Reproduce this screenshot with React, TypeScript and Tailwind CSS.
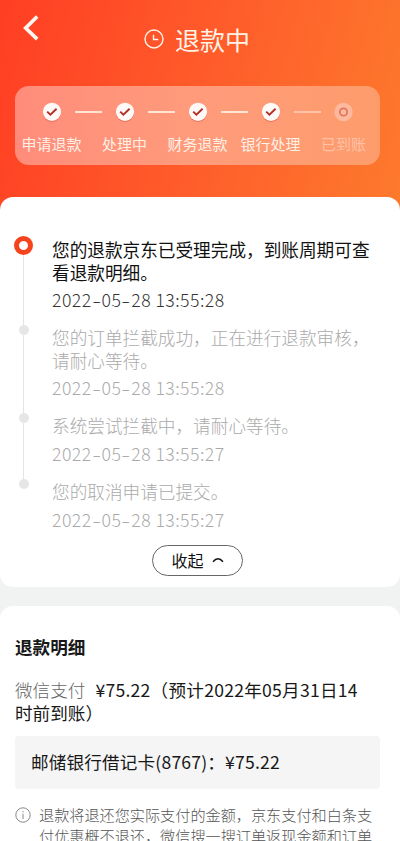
import React from 'react';
import { clsx } from 'clsx';

const steps = [
  { label: '申请退款', done: true },
  { label: '处理中', done: true },
  { label: '财务退款', done: true },
  { label: '银行处理', done: true },
  { label: '已到账', done: false },
];

const records = [
  {
    lines: ['您的退款京东已受理完成，到账周期可查', '看退款明细。'],
    date: '2022-05-28',
    time: '13:55:28',
    height: 'h-[89px]',
  },
  {
    lines: ['您的订单拦截成功，正在进行退款审核，', '请耐心等待。'],
    date: '2022-05-28',
    time: '13:55:28',
    height: 'h-[88px]',
  },
  {
    lines: ['系统尝试拦截中，请耐心等待。'],
    date: '2022-05-28',
    time: '13:55:27',
    height: 'h-[66px]',
  },
  {
    lines: ['您的取消申请已提交。'],
    date: '2022-05-28',
    time: '13:55:27',
    height: 'h-[66px]',
  },
];

function StepIcon({ done }: { done: boolean }) {
  if (!done) {
    return (
      <svg width="20" height="20" viewBox="0 0 20 20" fill="none">
        <circle cx="9.5" cy="10" r="9.2" fill="#fdb99d" />
        <circle cx="9.5" cy="10" r="3.7" stroke="#e2745e" strokeWidth="1.7" />
      </svg>
    );
  }
  return (
    <svg width="20" height="20" viewBox="0 0 20 20" fill="none">
      <circle cx="10" cy="10.8" r="9" fill="#e2573f" fillOpacity="0.75" />
      <circle cx="10" cy="9.8" r="9.1" fill="#fffaf8" />
      <path d="M5.2 9.6L8.4 12.6L14.6 6.8" stroke="#b22f26" strokeWidth="1.9" />
    </svg>
  );
}

function Progress() {
  return (
    <div className="mx-[15px] flex h-[79px] w-[365px] rounded-[14px] bg-gradient-to-r from-[#ff8c7b] via-[#ff9b7b] to-[#fd9c6b] pt-[16px]">
      {steps.map((step, index) => (
        <div
          key={step.label}
          className={clsx('w-[73px] shrink-0', step.done ? 'text-[#fff0e6]' : 'text-[#ffc2a6]')}
        >
          <div className="flex h-5 items-center">
            <div
              className={clsx(
                'h-[2px] w-[14px]',
                index > 0 && step.done && 'bg-[#ffe5d6]',
                index > 0 && !step.done && 'bg-[#ffc4a5]'
              )}
            />
            <div className="mx-[13px] shrink-0">
              <StepIcon done={step.done} />
            </div>
            <div
              className={clsx(
                'h-[2px] flex-1',
                index < 3 && 'bg-[#ffe5d6]',
                index === 3 && 'bg-[#ffc4a5]'
              )}
            />
          </div>
          <div className="-mx-2 mt-[11px] whitespace-nowrap text-center text-[15px] leading-[22px]">
            {step.label}
          </div>
        </div>
      ))}
    </div>
  );
}

function DateTime({ date, time }: { date: string; time: string }) {
  return (
    <>
      {date.split('-').map((part, index) => (
        <React.Fragment key={index}>
          {index > 0 && <span className="inline-block w-[10px] scale-x-150 text-center">-</span>}
          {part}
        </React.Fragment>
      ))}{' '}
      {time}
    </>
  );
}

function Timeline() {
  return (
    <div className="pl-[14px] pt-[39px]">
      {records.map((record, index) => (
        <div key={index} className={clsx('flex', record.height)}>
          <div className="flex w-[19px] shrink-0 flex-col items-center">
            {index === 0 ? (
              <div className="size-[19px] shrink-0 rounded-full border-[5px] border-[#f5431e] bg-white" />
            ) : (
              <div className="size-[10px] shrink-0 rounded-full bg-[#e6e6e6]" />
            )}
            {index < records.length - 1 && <div className="w-px flex-1 bg-[#e4e4e4]" />}
          </div>
          <div
            className={clsx(
              'ml-[19px] whitespace-nowrap text-[17.65px] leading-[22.5px]',
              index === 0 ? 'pt-[3px] text-[#111]' : 'pt-[2px] font-light text-[#aaa]'
            )}
          >
            <p>
              {record.lines.map((line, i) => (
                <React.Fragment key={line}>
                  {i > 0 && <br />}
                  {line}
                </React.Fragment>
              ))}
            </p>
            <p className={clsx('mt-[5px] tracking-[0.45px]', index === 0 && 'font-light text-[#333]')}>
              <DateTime date={record.date} time={record.time} />
            </p>
          </div>
        </div>
      ))}
    </div>
  );
}

export default function App() {
  return (
    <div className="flex h-[841px] w-[400px] flex-col overflow-hidden bg-[#f1f3f3] font-['Noto_Sans_CJK_SC',sans-serif]">
      {/* Header */}
      <header className="h-[212px] shrink-0 bg-[linear-gradient(105deg,#ff3e23_0%,#ff592a_45%,#fd7a2d_100%)]">
        <div className="flex h-[86px]">
          <svg className="ml-[22px] mt-[14px] shrink-0" width="18" height="28" viewBox="0 0 18 28" fill="none">
            <path d="M15.2 2.5L3.7 14L15.2 25.2" stroke="#fff6f2" strokeWidth="3.7" />
          </svg>
          <div className="ml-[104px] mt-[21px] flex h-[36px] items-center text-[#fff3e8]">
            <svg width="20" height="20" viewBox="0 0 20 20" fill="none" stroke="currentColor" strokeWidth="1.4">
              <circle cx="10" cy="10" r="9" />
              <path d="M9.5 5.7V10.5H14.3" />
            </svg>
            <h1 className="ml-[11px] text-[25px] leading-[36px]">退款中</h1>
          </div>
        </div>
        <Progress />
      </header>

      {/* Refund records */}
      <section className="relative -mt-[15px] h-[390px] shrink-0 rounded-[13px] bg-white">
        <Timeline />
        <button className="ml-[152px] flex h-[31px] w-[91px] items-center justify-center gap-[8px] rounded-full border border-[#666] pb-px text-[16px] text-[#111]">
          收起
          <svg width="12" height="6" viewBox="0 0 12 6" fill="none">
            <path d="M1 4.7Q6 -1 11 4.7" stroke="#111" strokeWidth="1.5" />
          </svg>
        </button>
      </section>

      {/* Refund details */}
      <section className="mt-[19px] flex-1 rounded-t-[13px] bg-white px-[15px] pt-[29px] text-[#181818]">
        <h2 className="text-[17.6px] font-bold leading-[24px]">退款明细</h2>
        <p className="mt-[19px] whitespace-nowrap text-[17.6px] leading-[23px]">
          <span className="mr-[10px] font-light text-[#666]">微信支付</span>
          <span className="tracking-[0.25px]">¥75.22（预计2022年05月31日14</span>
          <br />
          时前到账）
        </p>
        <div className="mt-[12px] flex h-[53px] w-[365px] items-center rounded-[4px] bg-[#f5f5f5] pl-[16px] text-[17.6px] tracking-[0.17px]">
          邮储银行借记卡(8767)：¥75.22
        </div>
        <div className="mt-[15px] flex">
          <svg className="mt-[3px] shrink-0" width="16" height="16" viewBox="0 0 16 16" fill="none" stroke="#888">
            <circle cx="8" cy="8" r="7.2" />
            <path d="M8 6.7V12M8 4V5.3" />
          </svg>
          <p className="ml-[8px] whitespace-nowrap text-[15.15px] font-light leading-[21px] text-[#555]">
            退款将退还您实际支付的金额，京东支付和白条支
            <br />
            付优惠概不退还，微信搜一搜订单返现金额和订单
          </p>
        </div>
      </section>
    </div>
  );
}
